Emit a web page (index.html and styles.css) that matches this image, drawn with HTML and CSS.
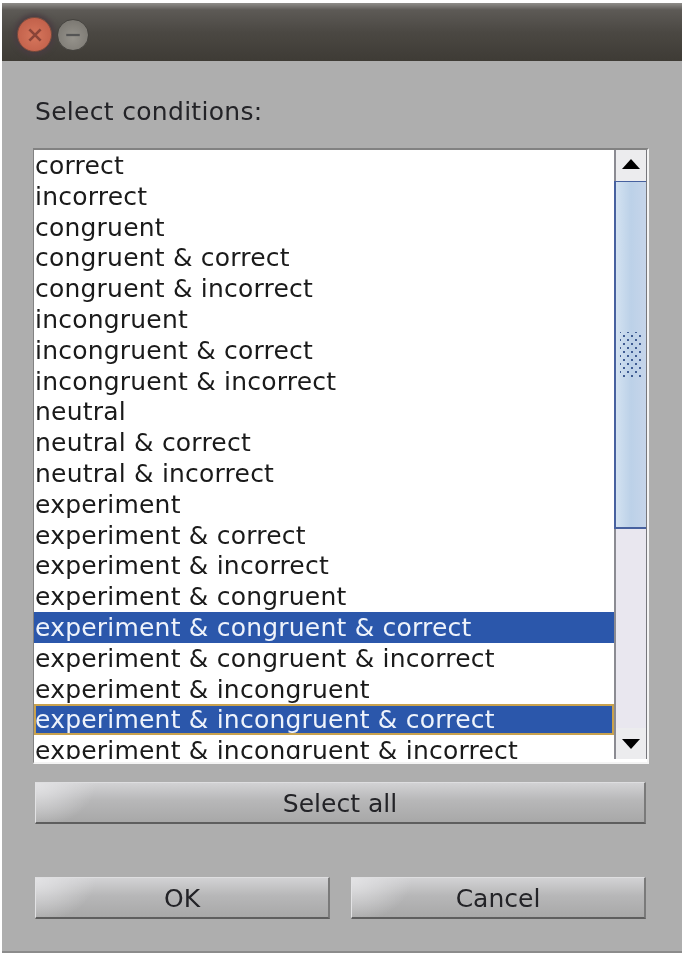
FILE: index.html
```html
<!DOCTYPE html>
<html lang="en">
<head>
  <meta charset="UTF-8" />
  <title>Select conditions</title>
  <link rel="stylesheet" href="styles.css">
</head>
<body>
  <div class="window">
    <div class="titlebar">
      <span class="win-btn close">
        <svg viewBox="0 0 16 16" width="18" height="18"><path d="M3 3L13 13M13 3L3 13" stroke="#8a4438" stroke-width="2.4" fill="none"/></svg>
      </span>
      <span class="win-btn minimize">
        <svg viewBox="0 0 16 16" width="18" height="18"><path d="M2 8H14" stroke="#555" stroke-width="2" fill="none"/></svg>
      </span>
    </div>

    <div class="content">
      <p class="prompt">Select conditions:</p>

      <div class="listbox">
        <ul class="items">
          <li>correct</li>
          <li>incorrect</li>
          <li>congruent</li>
          <li>congruent &amp; correct</li>
          <li>congruent &amp; incorrect</li>
          <li>incongruent</li>
          <li>incongruent &amp; correct</li>
          <li>incongruent &amp; incorrect</li>
          <li>neutral</li>
          <li>neutral &amp; correct</li>
          <li>neutral &amp; incorrect</li>
          <li>experiment</li>
          <li>experiment &amp; correct</li>
          <li>experiment &amp; incorrect</li>
          <li>experiment &amp; congruent</li>
          <li class="selected">experiment &amp; congruent &amp; correct</li>
          <li>experiment &amp; congruent &amp; incorrect</li>
          <li>experiment &amp; incongruent</li>
          <li class="selected focused">experiment &amp; incongruent &amp; correct</li>
          <li>experiment &amp; incongruent &amp; incorrect</li>
        </ul>
        <div class="scrollbar">
          <div class="arrow up">
            <svg viewBox="0 0 18 10" width="18" height="10"><path d="M9 0L18 10H0Z" fill="#000"/></svg>
          </div>
          <div class="thumb"><span class="grip"></span></div>
          <div class="track"></div>
          <div class="arrow">
            <svg viewBox="0 0 18 10" width="18" height="10"><path d="M0 0H18L9 10Z" fill="#000"/></svg>
          </div>
        </div>
      </div>

      <button class="btn select-all">Select all</button>

      <div class="actions">
        <button class="btn">OK</button>
        <button class="btn">Cancel</button>
      </div>
    </div>
  </div>
</body>
</html>
```

FILE: styles.css
```css
html, body {
  margin: 0;
  height: 100%;
  background: #fff;
}

body {
  font-family: "DejaVu Sans", sans-serif;
  color: #232327;
  padding: 3px 3px 2px 2px;
  box-sizing: border-box;
}

/* the reference is a soft, upscaled capture */
.window {
  height: 950px;
  background: #aeaeae;
  border-bottom: 2px solid #8c8c8c;
  box-sizing: border-box;
  filter: blur(0.5px);
}

.titlebar {
  height: 58px;
  background: linear-gradient(to bottom, #8f8d8a 0, #5d5a56 7px, #4b4843 50%, #3e3b35 100%);
  display: flex;
  align-items: center;
  padding: 5px 0 0 15px;
  gap: 5px;
  box-sizing: border-box;
}

.win-btn {
  border-radius: 50%;
  display: flex;
  align-items: center;
  justify-content: center;
  box-sizing: border-box;
}

.close {
  width: 35px;
  height: 35px;
  background: radial-gradient(circle at 50% 55%, #d6765c, #bb5a45);
  border: 1px solid #7d4a3c;
  box-shadow: 0 0 5px 3px #4a3d42;
}

.minimize {
  width: 32px;
  height: 32px;
  background: radial-gradient(circle at 50% 60%, #96938c, #74716b);
  border: 1px solid #44423e;
}

.content {
  padding: 36px 36px 0 33px;
}

.prompt {
  margin: 0 0 21px;
  font-size: 25px;
  line-height: 30px;
  letter-spacing: 0.3px;
}

.listbox {
  height: 616px;
  margin: 0 -3px 0 -2px;
  display: flex;
  background: #fff;
  border-top: 2px solid #828282;
  border-left: 1px solid #828282;
  border-right: 2px solid #f4f4f4;
  border-bottom: 2px solid #f4f4f4;
  box-sizing: border-box;
}

.items {
  flex: 1;
  list-style: none;
  margin: 0 0 3px;
  padding: 0;
  font-size: 25px;
  letter-spacing: 0.21px;
  color: #1a1a1a;
  overflow: hidden;
}

.items li {
  height: 30.8px;
  line-height: 31px;
  padding-left: 1px;
  white-space: nowrap;
  box-sizing: border-box;
}

.items .selected {
  background: #2b57ab;
  color: #eef3fb;
}

.items .focused {
  outline: 2px solid #c9a24e;
  outline-offset: -2px;
}

.scrollbar {
  width: 33px;
  flex: none;
  margin-bottom: 3px;
  display: flex;
  flex-direction: column;
  border-left: 2px solid #8b8b92;
  border-right: 1px solid #77777c;
  box-sizing: border-box;
}

.arrow {
  height: 31px;
  flex: none;
  background: #ececee;
  display: flex;
  align-items: center;
  justify-content: center;
}

.arrow.up {
  padding-bottom: 4px;
  box-sizing: border-box;
}

.thumb {
  height: 348px;
  flex: none;
  margin-left: -2px;
  background: linear-gradient(to right, #d3e2f1, #bcd1e8 50%, #c6d5ea);
  border-left: 2px solid #47619f;
  border-top: 1px solid #47619f;
  border-bottom: 2px solid #47619f;
  box-sizing: border-box;
  display: flex;
  align-items: center;
  justify-content: center;
}

.grip {
  width: 22px;
  height: 46px;
  background-image: radial-gradient(#3f5c93 1.1px, transparent 1.4px), radial-gradient(#3f5c93 1.1px, transparent 1.4px);
  background-size: 8px 8px;
  background-position: 0 0, 4px 4px;
}

.track {
  flex: 1;
  background: #e9e7ef;
}

.btn {
  display: block;
  height: 42px;
  font-family: inherit;
  font-size: 25px;
  color: #232327;
  background: radial-gradient(ellipse 60px 44px at 0 0, #e2e2e4, rgba(226, 226, 228, 0)), linear-gradient(to bottom, #d2d2d4 0%, #b7b7b8 45%, #a8a8a8 100%);
  border: 0;
  border-top: 1px solid #dedee0;
  border-left: 1px solid #e2e2e4;
  border-right: 2px solid #7a7a7a;
  border-bottom: 2px solid #5e5e5e;
  box-sizing: border-box;
  padding: 1px 0 0;
}

.select-all {
  width: 100%;
  margin-top: 18px;
}

.actions {
  display: flex;
  gap: 21px;
  margin-top: 53px;
}

.actions .btn {
  flex: 1;
}
```
